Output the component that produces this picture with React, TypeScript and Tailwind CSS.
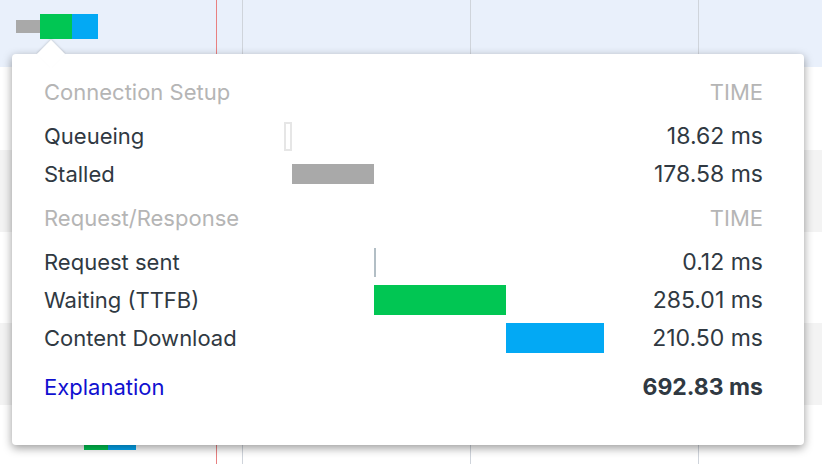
import React from "react";

const font = { fontFamily: "Inter, 'Helvetica Neue', Arial, sans-serif" };

type Row = { label: string; value: string; bar: React.ReactNode };

const setupRows: Row[] = [
  {
    label: "Queueing",
    value: "18.62 ms",
    bar: <div className="ml-[0px] w-[8px] h-[29px] border-2 border-[#e6e6e6]" />,
  },
  {
    label: "Stalled",
    value: "178.58 ms",
    bar: <div className="ml-[8px] w-[82px] h-[20px] bg-[#a9a9a9]" />,
  },
];

const reqRows: Row[] = [
  {
    label: "Request sent",
    value: "0.12 ms",
    bar: <div className="ml-[90px] w-[2px] h-[29px] bg-[#b2bec5]" />,
  },
  {
    label: "Waiting (TTFB)",
    value: "285.01 ms",
    bar: <div className="ml-[90px] w-[132px] h-[30px] bg-[#01c653]" />,
  },
  {
    label: "Content Download",
    value: "210.50 ms",
    bar: <div className="ml-[222px] w-[98px] h-[30px] bg-[#03a9f4]" />,
  },
];

function DataRow({ row }: { row: Row }) {
  return (
    <div className="flex h-[38px] items-center">
      <div className="w-[240px] shrink-0 text-[22px] text-[#303942]">{row.label}</div>
      <div className="flex-1 flex items-center">{row.bar}</div>
      <div className="text-[23px] text-[#303942]">{row.value}</div>
    </div>
  );
}

function Header({ title, className }: { title: string; className?: string }) {
  return (
    <div className={"flex h-[38px] items-center justify-between text-[22px] text-[#b5b5b5] " + (className ?? "")}>
      <span>{title}</span>
      <span>TIME</span>
    </div>
  );
}

export default function App() {
  return (
    <div className="relative w-[822px] h-[464px] overflow-hidden bg-white" style={font}>
      {/* background rows */}
      <div className="flex flex-col">
        <div className="h-[67px] bg-[#e9f0fb] relative">
          <div className="absolute left-[16px] top-[20px] w-[24px] h-[13px] bg-[#a9a9a9]" />
          <div className="absolute left-[40px] top-[14px] w-[32px] h-[25px] bg-[#01c653]" />
          <div className="absolute left-[72px] top-[14px] w-[26px] h-[25px] bg-[#03a9f4]" />
        </div>
        <div className="h-[83px] bg-white" />
        <div className="h-[82px] bg-[#f3f3f3]" />
        <div className="h-[91px] bg-white" />
        <div className="h-[82px] bg-[#f3f3f3]" />
        <div className="h-[59px] bg-white relative">
          <div className="absolute left-[84px] top-[25px] w-[24px] h-[20px] bg-[#01c653]" />
          <div className="absolute left-[108px] top-[25px] w-[28px] h-[20px] bg-[#03a9f4]" />
        </div>
      </div>

      {/* grid lines */}
      <div className="absolute top-0 bottom-0 left-[216px] w-px bg-[#e88080]" />
      <div className="absolute top-0 bottom-0 left-[242px] w-px bg-[#cfd4db]" />
      <div className="absolute top-0 bottom-0 left-[470px] w-px bg-[#cfd4db]" />
      <div className="absolute top-0 bottom-0 left-[698px] w-px bg-[#cfd4db]" />

      {/* popup */}
      <div className="absolute left-[12px] top-[54px] w-[792px] h-[391px] bg-white rounded-[4px] shadow-[0_3px_10px_rgba(0,0,0,0.4)] pl-[32px] pr-[41px] pt-[19px]">
        <div className="absolute left-[29px] top-[-10px] w-[20px] h-[20px] bg-white rotate-45 shadow-[-1px_-1px_2px_rgba(0,0,0,0.12)]" />
        <div className="relative">
          <Header title="Connection Setup" className="mb-[6px]" />
          {setupRows.map((r) => (
            <DataRow key={r.label} row={r} />
          ))}
          <Header title="Request/Response" className="mt-[6px] mb-[6px]" />
          {reqRows.map((r) => (
            <DataRow key={r.label} row={r} />
          ))}
          <div className="flex h-[38px] mt-[11px] items-center justify-between">
            <span className="text-[22px] text-[#1010d0]">Explanation</span>
            <span className="text-[23px] font-bold text-[#303942]">692.83 ms</span>
          </div>
        </div>
      </div>
    </div>
  );
}
